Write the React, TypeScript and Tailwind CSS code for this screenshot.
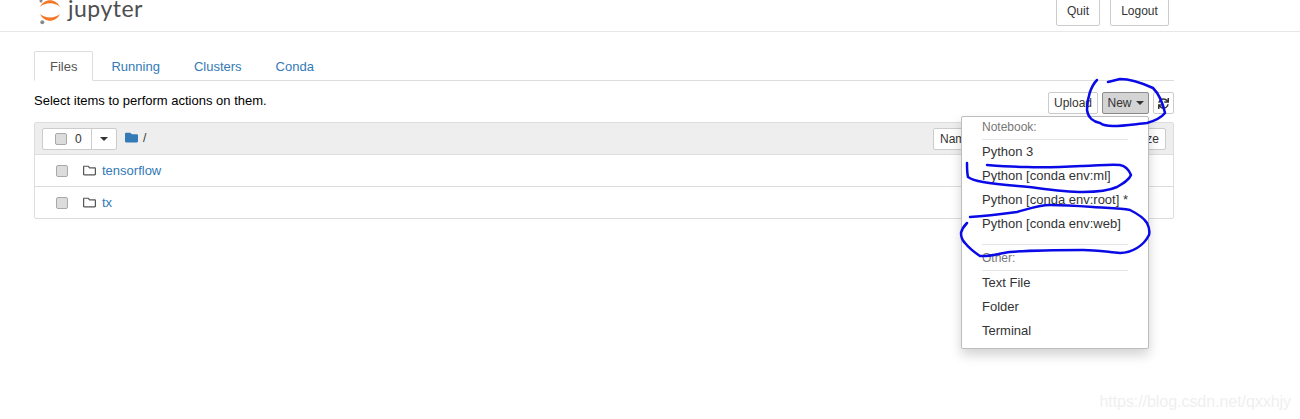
import { FaFolder, FaRegFolder, FaSync } from "react-icons/fa";

function Check() {
  return <span className="block w-[12px] h-[12px] rounded-[2px] border border-[#a9a9a9] bg-[#dcdcdc] shrink-0" />;
}

function Caret({ color = "border-t-[#333]" }: { color?: string }) {
  return <span className={`inline-block w-0 h-0 border-x-[4px] border-x-transparent border-t-[4px] ${color}`} />;
}

function Row({ name, last }: { name: string; last?: boolean }) {
  return (
    <div className={`flex items-center pl-[21px] ${last ? "h-[31px]" : "h-[32px] border-b border-[#ddd]"}`}>
      <Check />
      <FaRegFolder className="ml-[15px] text-[13px] text-[#555]" />
      <a className="ml-[6px] text-[#337ab7]">{name}</a>
    </div>
  );
}

function Heading({ text, h }: { text: string; h: string }) {
  return <div className={`${h} pl-[20px] flex items-center text-[12px] text-[#777]`}>{text}</div>;
}

function Item({ text }: { text: string }) {
  return <div className="h-[24px] pl-[20px] flex items-center text-[#333]">{text}</div>;
}

function Divider() {
  return <div className="h-px bg-[#e5e5e5] ml-[20px] mr-[20px]" />;
}

export default function App() {
  return (
    <div className="relative w-[1300px] h-[419px] overflow-hidden bg-white text-[13px] leading-[18px] text-black font-['Liberation_Sans',Arial,sans-serif]">
      <header className="h-[32px] border-b border-[#e7e7e7] flex justify-between pl-[38px] pr-[131px]">
        <div className="flex items-start">
          <svg width="25" height="26" viewBox="0 0 25 26" className="shrink-0">
            <path d="M2 7 C6 -2 18 -2 22 7 C17 2 7 2 2 7 Z" fill="#f37726" />
            <path d="M2 14 C6 23 18 23 22 14 C17 18.5 7 18.5 2 14 Z" fill="#f37726" />
            <circle cx="4.3" cy="22.3" r="2" fill="#8a8a8a" />
            <circle cx="3" cy="1" r="1.5" fill="#8a8a8a" />
          </svg>
          <span className="ml-[5px] -mt-[6px] text-[23px] leading-[28px] tracking-[0.5px] text-[#4e4e4e] font-['Lato',sans-serif]">jupyter</span>
        </div>
        <div className="flex gap-[10px] -mt-[4px] h-[30px]">
          <button className="w-[44px] h-[30px] border border-[#ccc] rounded-[2px] text-[12px] text-[#333] pb-[1px]">Quit</button>
          <button className="w-[59px] h-[30px] border border-[#ccc] rounded-[2px] text-[12px] text-[#333] pb-[1px]">Logout</button>
        </div>
      </header>

      <main className="w-[1140px] ml-[34px] pt-[19px]">
        <nav className="flex gap-[2px] h-[30px] border-b border-[#ddd]">
          <a className="h-[30px] px-[15px] pt-[1px] flex items-center bg-white border border-[#ddd] border-b-white rounded-t-[2px] text-[#555]">Files</a>
          <a className="h-[30px] px-[16px] pt-[1px] flex items-center text-[#337ab7]">Running</a>
          <a className="h-[30px] px-[16px] pt-[1px] flex items-center text-[#337ab7]">Clusters</a>
          <a className="h-[30px] px-[16px] pt-[1px] flex items-center text-[#337ab7]">Conda</a>
        </nav>

        <div className="h-[41px] pt-[11px] flex justify-between items-start">
          <span>Select items to perform actions on them.</span>
          <div className="flex">
            <button className="w-[50px] h-[22px] border border-[#ccc] rounded-[2px] text-[12px] text-[#333] bg-white">Upload</button>
            <button className="ml-[4px] w-[47px] h-[22px] border border-[#8c8c8c] rounded-[2px] text-[12px] text-[#333] bg-[#d4d4d4] flex items-center justify-center gap-[4px]">
              New <Caret />
            </button>
            <button className="ml-[4px] w-[21px] h-[22px] border border-[#ccc] rounded-[2px] bg-white flex items-center justify-center">
              <FaSync className="text-[11px] text-[#333]" />
            </button>
          </div>
        </div>

        <section className="border border-[#ddd] rounded-[2px]">
          <div className="h-[32px] bg-[#eee] border-b border-[#ddd] flex items-center justify-between pl-[7px] pr-[7px]">
            <div className="flex items-center">
              <div className="flex h-[22px] w-[75px] bg-white border border-[#ccc] rounded-[2px]">
                <div className="w-[49px] flex items-center border-r border-[#ccc] pl-[12px]">
                  <Check />
                  <span className="ml-[8px] pt-[1px] text-[12px] text-[#333]">0</span>
                </div>
                <div className="flex-1 flex items-center justify-center pt-[1px]">
                  <Caret />
                </div>
              </div>
              <FaFolder className="ml-[8px] -mt-[3px] text-[13px] text-[#337ab7]" />
              <span className="ml-[5px] -mt-[2px] text-[12px] text-[#333]">/</span>
            </div>
            <div className="flex items-center justify-between w-[233px] h-[22px] bg-white border border-[#ccc] rounded-[2px] px-[6px] text-[12px] text-[#333]">
              <span>Name</span>
              <span>File size</span>
            </div>
          </div>
          <Row name="tensorflow" />
          <Row name="tx" last />
        </section>
      </main>

      <div className="absolute left-[961px] top-[116px] w-[188px] h-[233px] bg-white border border-[#bdbdbd] rounded-[2px] shadow-[0_6px_12px_rgba(0,0,0,0.175)]">
        <Heading text="Notebook:" h="h-[22px] pb-[2px]" />
        <Divider />
        <Item text="Python 3" />
        <Item text="Python [conda env:ml]" />
        <Item text="Python [conda env:root] *" />
        <Item text="Python [conda env:web]" />
        <div className="mt-[8px]"><Divider /></div>
        <Heading text="Other:" h="h-[25px]" />
        <Divider />
        <Item text="Text File" />
        <Item text="Folder" />
        <Item text="Terminal" />
      </div>

      <svg className="absolute left-0 top-0 pointer-events-none" width="1300" height="419" fill="none" stroke="#0a0ae6" strokeWidth="2.5" strokeLinecap="round" strokeLinejoin="round">
        <path d="M1097 80 C1091 86 1087 98 1087 110 C1088 118 1094 122 1100 123 C1104 126 1109 126 1113 126 C1124 126 1136 124 1147 123 C1154 121 1161 118 1165 113 C1163 104 1160 95 1153 88 C1142 83 1131 79 1120 79 C1116 80 1112 81 1108 82" />
        <path d="M967 163 C967 168 967 173 968 177 C972 180 977 181 983 182 C1000 185 1020 186 1037 188 C1052 190 1068 192 1083 192 C1096 192 1108 191 1117 187 C1124 183 1129 180 1131 175 C1129 170 1126 166 1120 165 C1108 164 1096 166 1083 166 C1064 167 1046 168 1027 167 C1013 167 1000 166 987 165" />
        <path d="M970 217 C986 216 1002 214 1017 212 C1028 209 1039 205 1050 205 C1064 205 1079 206 1093 207 C1106 208 1120 208 1130 210 C1138 214 1144 218 1147 223 C1149 227 1150 231 1149 235 C1146 241 1142 245 1137 248 C1132 251 1126 253 1120 253 C1108 252 1096 250 1083 250 C1059 250 1034 250 1010 252 C1000 253 990 257 980 256 C974 252 969 248 965 243 C962 240 961 236 961 233 C962 229 964 226 967 223" />
      </svg>

      <div className="absolute right-[9px] top-[392px] text-[16px] tracking-[-0.05px] leading-[20px] text-[#efefef]">https://blog.csdn.net/qxxhjy</div>
    </div>
  );
}
